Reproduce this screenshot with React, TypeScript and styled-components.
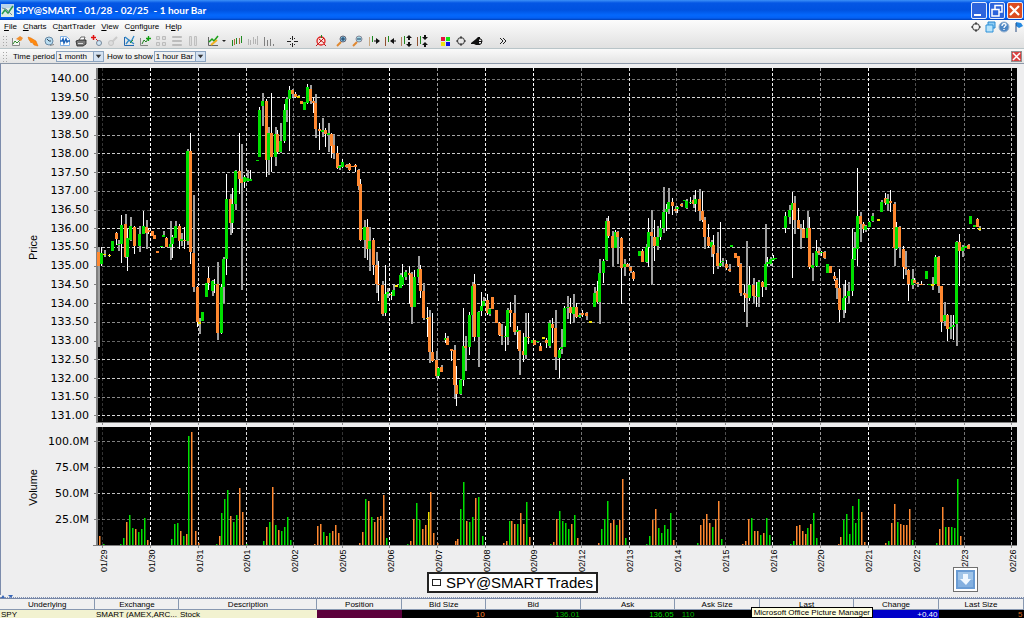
import { ReactNode } from "react";
import styled, { createGlobalStyle } from "styled-components";

type Candle = [number, number, number, number, number, string];

const COLORS: Record<string, string> = {
  G: "#00e000",
  O: "#ff8830",
  Y: "#f0e000",
};

const GRID_X = [
  [102, 0.2], [150, 1], [198, 0.85], [246, 0.85], [293, 0.45], [342, 0.2], [389, 1],
  [437, 0.6], [485, 0.95], [533, 1], [581, 0.45], [629, 0.85], [676, 0.45], [725, 0.3],
  [772, 0.95], [820, 0.6], [868, 1], [915, 0.3], [964, 0.45], [1011, 0.75],
];

const PRICE_GRID = [
  [79, 0.45], [97, 0.85], [116, 0.5], [135, 0.65], [153, 0.8], [172, 0.75], [191, 0.55],
  [210, 0.35], [228, 0.9], [247, 0.8], [266, 0.5], [284, 0.85], [303, 0.75], [322, 0.55],
  [341, 0.4], [359, 0.8], [378, 0.8], [397, 0.55], [415, 0.85],
];

const VOLUME_GRID = [[441, 0.5], [467, 0.75], [493, 0.75], [519, 0.4]];

const DATES = [
  "01/29", "01/30", "01/31", "02/01", "02/02", "02/05", "02/06", "02/07", "02/08", "02/09",
  "02/12", "02/13", "02/14", "02/15", "02/16", "02/20", "02/21", "02/22", "02/23", "02/26",
];

const PRICES = Array.from({ length: 19 }, (_, i) => (140 - i * 0.5).toFixed(2));
const VOLUMES = ["100.0M", "75.0M", "50.0M", "25.0M"];

// x, wick top, wick bottom, body top, body bottom, colour
const CANDLES: Candle[] = `
98 247 347 252 266 O|101 247 266 253 264 G|104 250 257 254 255 Y|109 254 257 255 256 Y|112 241 251 241 251 G
116 232 245 233 239 O|118 240 251 244 245 G|121 215 263 225 244 G|125 214 258 224 257 O|127 229 271 238 257 G
130 217 241 226 240 G|134 226 254 227 246 O|139 226 252 234 246 G|143 211 234 226 234 G|146 220 249 227 233 O
148 228 234 230 232 O|152 231 236 231 236 O|154 235 239 235 239 O|157 251 253 251 253 O|161 246 248 246 247 G
163 231 237 235 237 G|166 237 247 238 247 O|170 221 260 244 247 G|172 235 258 237 244 G|175 221 238 226 238 G
179 224 249 226 241 O|181 233 246 239 241 G|184 227 249 240 241 O|187 149 245 151 241 G|190 133 264 151 252 O
193 195 292 253 287 O|197 286 327 287 322 O|199 318 334 322 324 Y|202 312 321 312 321 G|206 283 297 283 297 G
208 267 290 278 283 O|212 280 296 281 291 G|214 279 293 284 285 G|217 262 340 284 333 O|221 284 334 287 333 G
223 257 304 259 287 G|226 174 275 199 259 G|230 194 235 199 223 O|232 188 233 204 223 G|235 170 210 171 204 G
239 133 194 171 179 O|241 144 290 179 183 O|244 175 188 177 182 G|247 170 182 178 181 G|250 170 181 179 181 G
257 160 161 160 161 G|259 107 157 110 157 G|262 93 126 101 106 G|266 99 177 101 160 O|268 127 175 133 160 G
271 93 172 133 157 O|275 127 166 134 157 G|277 130 154 134 152 O|280 123 153 141 152 G|284 104 143 110 141 G
286 97 122 99 110 G|289 86 151 90 99 G|292 89 97 90 94 O|295 92 98 94 97 O|298 95 97 96 98 Y
301 101 104 101 104 O|304 102 110 102 110 G|307 84 104 87 103 G|310 85 104 89 101 O|313 97 113 101 103 O
315 94 138 103 129 O|319 123 150 129 131 O|322 118 137 130 132 G|325 128 147 130 134 O|328 123 152 133 135 G
331 133 158 134 146 O|333 134 159 145 153 O|337 146 169 153 168 O|339 165 170 166 168 G|342 159 168 162 167 G
346 164 168 165 167 O|349 163 171 164 170 O|352 166 167 166 167 O|355 164 172 165 167 O|358 169 190 170 186 O
360 179 241 184 240 O|364 220 258 227 240 G|367 219 260 227 249 O|369 227 271 241 249 G|373 238 275 240 265 O
376 252 293 265 284 O|378 261 301 284 285 O|382 281 316 285 314 O|385 265 316 294 313 G|387 288 298 292 294 G
391 292 300 294 295 O|393 285 296 290 296 G|396 285 287 285 287 Y|400 273 288 275 288 G|402 264 286 277 285 G
405 270 280 272 277 G|409 266 304 273 275 O|411 272 324 274 307 O|414 270 307 277 307 G|418 256 283 269 277 G
420 265 298 269 291 O|423 283 320 291 318 O|427 307 337 318 319 Y|429 310 363 317 352 O|432 313 362 352 361 O
436 351 378 360 376 O|438 367 378 368 376 G|441 365 372 367 372 O|445 333 343 338 340 G|447 336 345 338 345 O
451 349 361 349 351 O|454 345 399 350 385 O|456 366 406 385 394 O|460 379 395 380 394 G|463 308 386 346 380 G
465 336 371 346 348 O|469 312 355 315 347 G|472 282 337 286 315 G|474 274 341 284 337 O|478 311 367 312 337 G
481 292 316 306 311 G|483 297 306 301 306 G|487 294 315 300 313 O|489 308 316 309 314 G|492 297 309 297 309 O
496 310 323 310 323 O|499 322 336 323 335 O|501 324 345 335 336 O|505 326 351 336 337 G|507 308 345 310 337 G
510 302 327 310 313 O|514 295 335 313 332 O|517 326 349 330 332 G|519 330 375 331 351 O|523 333 362 351 355 O
525 313 359 337 355 G|528 313 344 337 338 O|532 340 343 340 343 G|534 340 345 340 345 O|537 341 343 341 342 G
540 343 351 346 351 O|543 337 339 337 339 Y|546 338 348 340 343 O|549 320 348 323 346 G|552 318 343 324 328 O
555 310 370 328 357 O|559 348 378 350 358 G|561 329 354 347 349 G|564 306 347 308 347 G|567 296 319 307 308 G
570 298 324 307 313 O|573 294 323 307 314 G|576 303 318 307 317 O|579 313 318 315 317 G|582 310 317 313 315 O
586 312 320 313 316 O|590 321 323 321 323 Y|594 287 307 293 307 G|597 281 303 291 302 O|599 259 324 273 302 G
603 259 283 261 273 G|606 218 261 221 260 G|608 216 238 221 236 O|612 231 267 236 248 O|615 230 248 232 248 G
617 231 264 232 237 O|621 237 304 238 268 O|624 259 276 264 267 G|627 263 267 264 267 O|630 266 273 267 271 O
633 271 281 272 279 O|639 251 256 251 256 G|642 249 262 251 262 O|646 244 263 247 262 G|648 218 267 232 247 G
651 210 285 232 236 O|654 220 261 237 246 O|657 226 250 237 246 G|660 220 240 228 237 G|663 187 233 212 228 G
666 204 231 209 212 G|668 188 214 202 209 G|672 198 215 202 206 O|675 206 213 209 211 O|677 206 213 207 209 G
681 203 207 204 206 O|684 200 201 200 201 G|686 199 209 201 208 G|690 197 204 202 203 G|693 195 208 200 204 O
695 190 212 199 204 G|699 189 221 199 211 O|702 191 222 211 220 O|704 217 249 220 237 O|708 224 248 237 246 O
711 240 257 242 247 G|713 235 274 245 254 O|717 232 269 253 266 O|720 222 267 263 266 G|722 258 266 261 262 G
726 260 270 264 268 O|729 264 272 269 271 O|731 245 247 245 247 G|735 253 258 253 258 O|738 256 267 256 266 O
740 263 296 264 293 O|744 285 312 293 295 O|746 241 327 294 298 O|749 266 301 285 298 G|753 278 304 285 296 O
756 282 307 296 297 O|758 280 307 282 297 G|762 281 297 282 287 O|765 224 290 264 287 G|767 257 266 262 264 G
770 257 266 259 264 G|773 255 261 258 260 G|775 258 259 258 259 G|785 212 233 216 228 G|789 205 224 210 217 G
792 192 278 203 210 G|794 196 234 203 220 O|798 208 229 220 228 O|800 224 249 228 229 O|803 220 238 229 238 O
807 211 238 228 238 G|809 217 269 228 267 O|812 253 281 265 268 G|816 240 267 251 266 G|818 248 255 251 253 O
821 251 256 252 253 G|824 251 259 252 258 O|827 264 273 264 273 G|830 266 273 266 273 O|834 272 281 276 279 O
836 278 299 280 288 O|839 269 322 288 310 O|843 285 318 298 310 G|845 280 313 296 298 G|848 282 304 291 296 G
852 229 296 259 291 G|854 232 260 248 259 G|857 168 266 216 249 G|860 212 242 216 224 O|863 222 233 224 229 O
865 225 232 226 230 G|869 221 227 222 227 G|872 213 222 216 221 G|878 219 221 219 221 Y|881 200 212 202 212 G
885 193 205 198 203 O|887 194 211 199 204 G|890 190 212 201 203 O|894 202 266 204 248 O|896 222 250 227 249 G
899 226 258 227 247 O|903 246 279 249 267 O|905 251 275 267 269 O|908 269 301 270 284 O|912 269 289 279 285 G
914 278 283 280 283 O|917 282 287 283 284 O|921 281 285 284 285 O|926 271 279 271 279 G|929 284 285 284 285 G
932 277 290 284 286 Y|935 255 284 257 284 G|938 256 293 257 286 O|941 286 332 286 322 O|944 302 326 315 321 G
947 314 341 315 329 O|950 315 339 327 329 G|953 315 340 325 327 G|956 241 346 242 324 G|959 234 286 242 251 O
962 245 257 247 251 G|965 246 248 246 248 G|968 244 249 245 249 O|970 216 224 216 224 G|974 225 227 225 227 G
977 218 227 219 227 O|979 226 231 228 230 Y`
  .trim()
  .split(/[|\n]/)
  .map((row) => {
    const [x, high, low, top, bottom, tone] = row.split(" ");
    return [+x, +high, +low, +top, +bottom, tone];
  });

// x, top, colour
const BARS = `
99 536 O|103 544 G|120 544 G|123 538 G|126 522 O|129 515 G|132 528 G|135 529 O|138 532 G|141 529 G|144 518 G|147 540 O
171 539 G|174 524 G|177 523 G|180 531 O|183 536 G|186 534 O|188 436 G|191 432 O|195 531 O|198 543 O
216 544 G|219 536 O|221 513 G|224 499 G|227 490 G|230 516 O|233 522 G|236 515 G|239 488 O|242 512 O
246 544 G|263 541 G|266 527 O|269 522 G|272 487 O|275 525 G|278 530 O|281 531 G|284 527 G|287 517 G|290 540 G
314 544 O|317 526 O|320 524 O|323 532 G|326 536 O|329 533 G|332 531 O|335 525 O|338 533 O
359 543 O|362 532 O|365 499 G|368 501 O|371 517 G|374 522 O|377 517 O|380 516 O|383 495 O|386 538 G
407 544 G|410 541 O|413 519 O|416 503 G|419 520 G|422 529 O|425 525 O|428 512 Y|430 492 O|433 533 O|437 543 O
455 541 O|457 539 O|460 509 G|463 482 G|466 521 O|469 522 G|472 517 G|475 498 O|478 497 G|482 536 G
503 543 O|506 541 O|509 521 G|511 521 O|514 524 O|517 524 G|520 513 O|523 524 O|526 502 G|529 537 O
550 544 G|553 542 O|556 519 O|559 511 G|562 521 G|565 523 G|568 529 G|571 524 O|574 515 G|577 538 O
598 543 O|601 529 G|604 519 G|607 501 G|610 523 O|613 520 O|616 525 G|619 520 O|622 479 O|625 538 G
646 544 G|649 536 G|652 520 O|655 509 O|658 528 G|661 533 G|664 525 G|667 529 G|670 513 G|673 540 O
697 543 G|700 525 O|703 519 O|706 514 O|709 523 O|712 527 G|715 519 O|718 501 O|721 539 G
742 544 O|745 541 O|748 519 O|751 518 G|754 531 O|757 531 O|760 535 G|763 533 O|766 518 G|769 535 G
790 544 G|793 541 G|796 526 O|799 525 O|802 531 O|805 534 O|807 528 G|810 524 O|813 513 G|816 538 G
838 544 O|840 537 O|843 520 G|846 514 G|849 534 G|852 506 G|855 523 G|858 499 G|861 512 O|864 542 O
885 543 O|888 541 G|891 523 O|894 504 O|897 522 G|900 524 O|903 525 O|906 525 O|909 509 O|912 540 G
936 543 G|939 529 O|942 507 O|945 527 G|948 527 O|951 527 G|954 528 G|957 479 G|960 536 O`
  .trim()
  .split(/[|\n]/)
  .map((row) => row.split(" "));

const ICONS: Record<string, ReactNode> = {
  newChart: (
    <>
      <path d="M1.5 3v7.500h7V7" fill="#f4f4f0" stroke="#888" />
      <path d="M2 9l2-3 2 2 3-3" fill="none" stroke="#2a8a2a" />
      <path d="M5 4l4-3 3 2-2 3z" fill="#f09030" />
    </>
  ),
  hand: <path d="M1 2l3 1 5 3 2 5-4-1-2-3-1 1-1-2-1-1z" fill="#ff8a10" stroke="#e06a00" strokeWidth=".5" />,
  clock: (
    <>
      <circle cx="6" cy="6" r="4" fill="#b8dcf0" stroke="#6888a4" />
      <path d="M4 4l2 2h2" fill="none" stroke="#345" />
      <path d="M7 10.500l4-1" stroke="#888" />
    </>
  ),
  page: (
    <>
      <path d="M1.500 1.500h6l3 3v6h-9z" fill="#fff" stroke="#80b0e4" />
      <path d="M1 6h2l1-2 1 4 2-4 1 3 1-1h2" fill="none" stroke="#1c62b8" strokeWidth="1.500" />
    </>
  ),
  print: (
    <>
      <path d="M4 5l2-3h4l-1 3" fill="#fff" stroke="#444" strokeWidth=".8" />
      <path d="M1 6l3-1h7v4l-3 2H2z" fill="#777" stroke="#222" strokeWidth=".8" />
      <path d="M3 8.500h5" stroke="#ddd" />
    </>
  ),
  addLink: (
    <>
      <path d="M0 2.500h5M2.500 0v5" stroke="#e01010" strokeWidth="1.500" />
      <path d="M5 4l2 2" stroke="#e01010" />
      <circle cx="8" cy="8" r="2.500" fill="#cfe4f4" stroke="#789" />
    </>
  ),
  unlink: (
    <>
      <path d="M5 7l5-5" stroke="#cacaca" strokeWidth="2" />
      <circle cx="4" cy="8" r="2.500" fill="#ddd" stroke="#c4c4c4" />
    </>
  ),
  trend: (
    <>
      <path d="M1.500 2v8.500H11" fill="none" stroke="#2468b0" />
      <path d="M2 2l9 7M3 9l3-4 2 2 3-6" fill="none" stroke="#3088c8" strokeWidth="1.300" />
      <path d="M7 8l3-3" stroke="#2a9a2a" />
    </>
  ),
  addChart: (
    <>
      <path d="M1.500 3v7.500H9" fill="none" stroke="#888" />
      <path d="M3 9l2-4 2 2 2-3" fill="none" stroke="#208020" />
      <path d="M7 3.500h5M9.500 1v5" stroke="#10a010" strokeWidth="1.300" />
    </>
  ),
  grid: <path d="M1.500 1.500h3v3h-3zM7.500 1.500h3v3h-3zM1.500 7.500h3v3h-3zM7.500 7.500h3v3h-3z" fill="#ddd" stroke="#bcbcbc" />,
  rows: <path d="M1.500 1.500h9v1h-9zM1.500 5.500h9v1h-9zM1.500 9.500h9v1h-9z" fill="#ccc" stroke="#bcbcbc" />,
  columns: <path d="M2.500 1.500h2v9h-2zM7.500 1.500h2v9h-2z" fill="#ddd" stroke="#c0c0c0" />,
  bars: (
    <>
      <path d="M1.500 5v6M5.500 3v6M10.500 1v7" stroke="#208a20" />
      <path d="M3.500 4v6M8.500 3v6" stroke="#b06838" />
    </>
  ),
  barsOff: <path d="M1.500 4v6M3.500 5v5M6.500 2v7M8.500 4v5M10.500 1v9" stroke="#b4b4b4" />,
  volume: <path d="M1.500 2v9M4.500 5v6M7.500 4v7M10.500 9v2" stroke="#808080" />,
  cross: <path d="M6.500 1v4M6.500 8v4M1 6.500h4M8 6.500h4M4 3.500h1M4 9.500h1M8 3.500h1M8 9.500h1" stroke="#222" />,
  alert: (
    <>
      <circle cx="6" cy="6" r="4" fill="#f8e4e0" stroke="#e02020" strokeWidth="1.300" />
      <path d="M3 9l6-6M4 4l5 4M1 11l2-2M9 9l2 2" stroke="#c01818" />
      <path d="M6.500 0v3" stroke="#208020" />
    </>
  ),
  zoomIn: (
    <>
      <path d="M1 11l4-4" stroke="#e08830" strokeWidth="2" />
      <circle cx="7" cy="4" r="3" fill="#7ec0e0" stroke="#667" />
      <path d="M5 4h4M7 2v4" stroke="#1a3a60" />
    </>
  ),
  zoomOut: (
    <>
      <path d="M1 11l4-4" stroke="#e08830" strokeWidth="2" />
      <circle cx="7" cy="4" r="3" fill="#a4d8e4" stroke="#889" />
      <path d="M5 4h4" stroke="#1a3a60" />
    </>
  ),
  scrollRight: (
    <>
      <path d="M1.500 2v9" stroke="#c8a880" />
      <path d="M4.500 1v6" stroke="#208a20" />
      <path d="M6 5.500h2V3l4 3-4 3V6.500H6z" fill="#111" />
    </>
  ),
  scrollLeft: (
    <>
      <path d="M1.500 2v9" stroke="#905030" />
      <path d="M4.500 1v6" stroke="#208a20" />
      <path d="M12 5.500h-2V3L6 6l4 3V6.500h2z" fill="#111" />
    </>
  ),
  stretch: (
    <>
      <path d="M1.500 2v9" stroke="#b08060" />
      <path d="M4.500 1v8" stroke="#208a20" />
      <path d="M9 0l3 3h-2v2H8V3H6zM9 12l3-3h-2V7H8v2H6z" fill="#111" />
    </>
  ),
  squeeze: (
    <>
      <path d="M1.500 2v9" stroke="#905030" />
      <path d="M4.500 1v8" stroke="#208a20" />
      <path d="M9 5l3-3h-2V0H8v2H6zM9 7l3 3h-2v2H8v-2H6z" fill="#111" />
    </>
  ),
  palette: (
    <>
      <path d="M2 2h4v4H2z" fill="#e81040" />
      <path d="M7 2h4v4H7z" fill="#10e810" />
      <path d="M2 7h4v4H2z" fill="#f0e010" />
      <path d="M7 7h4v4H7z" fill="#1010e0" />
    </>
  ),
  target: (
    <>
      <circle cx="6" cy="6" r="3.500" fill="none" stroke="#333" />
      <path d="M6 1v3M6 8v3M1 6h2M9 6h2" stroke="#333" />
    </>
  ),
  megaphone: (
    <>
      <path d="M0 8l5-4 2-2h2v8H5L3 9H0z" fill="#111" />
      <path d="M8 4h2l1 2-1 3H8" fill="#eee" stroke="#111" />
      <path d="M8 6.500h3" stroke="#111" />
    </>
  ),
  windows: (
    <>
      <path d="M4 1h7v6H4z" fill="#8ccbf4" stroke="#2888d0" />
      <path d="M2 4h7v7H2z" fill="#b8e4fc" stroke="#2c90d8" />
    </>
  ),
  help: (
    <>
      <circle cx="6" cy="6" r="5" fill="#4c86c4" stroke="#9ab4d0" />
      <path d="M4 5c0-3 4-3 4-1 0 1-2 1-2 3M6 8v1" fill="none" stroke="#fff" strokeWidth="1.300" />
    </>
  ),
  pin: (
    <>
      <path d="M4 1l5 1 2 3-4 2-3-2z" fill="#2488e0" />
      <path d="M4 2v9" stroke="#244a80" />
    </>
  ),
};

const TOOL_GROUPS: { lead: number; names: string[] }[] = [
  {
    lead: 1,
    names: [
      "newChart", "hand", "clock", "page", "print", "addLink",
      "unlink", "trend", "addChart", "grid", "rows", "columns",
    ],
  },
  { lead: 8, names: ["draw", "bars", "barsOff", "volume"] },
  { lead: 11, names: ["cross"] },
  { lead: 17, names: ["alert"] },
  { lead: 9, names: ["zoomIn", "zoomOut", "scrollRight", "scrollLeft", "stretch", "squeeze"] },
  { lead: 11, names: ["palette", "target", "megaphone"] },
];

const QUOTES = [
  { head: "Underlying", value: "SPY", width: 95, bg: "#f2f2d0", color: "#000" },
  { head: "Exchange", value: "SMART (AMEX,ARC...", width: 84, bg: "#f2f2d0", color: "#000" },
  { head: "Description", value: "Stock", width: 138, bg: "#f2f2d0", color: "#000" },
  { head: "Position", value: "", width: 85, bg: "#5c003c", color: "#fff" },
  { head: "Bid Size", value: "10", width: 84, bg: "#000", color: "#ff8830", right: true },
  { head: "Bid", value: "136.01", width: 95, bg: "#000", color: "#00b400", right: true },
  { head: "Ask", value: "136.05", width: 94, bg: "#000", color: "#00d800", right: true },
  { head: "Ask Size", value: "110", width: 85, bg: "#000", color: "#00b400", indent: 6 },
  { head: "Last", value: "", width: 94, bg: "#000", color: "#fff", right: true },
  { head: "Change", value: "+0.40", width: 85, bg: "#0000c8", color: "#fff", right: true },
  { head: "Last Size", value: "5", width: 85, bg: "#000", color: "#d86820", right: true },
];

function Icon({ name }: { name: string }) {
  return (
    <svg width="12" height="12" viewBox="0 0 12 12" aria-hidden="true">
      {ICONS[name]}
    </svg>
  );
}

function GridLines({ rows, top, bottom }: { rows: number[][]; top: number; bottom: number }) {
  return (
    <>
      {GRID_X.map(([x, opacity]) => (
        <path
          key={x}
          d={`M${x + 0.5} ${top}V${bottom}`}
          stroke="#fff"
          strokeDasharray="3 2"
          opacity={opacity}
        />
      ))}
      {rows.map(([y, opacity]) => (
        <g key={y}>
          <path d={`M97 ${y + 0.5}H1017`} stroke="#fff" strokeDasharray="3 2" opacity={opacity} />
          <path d={`M94 ${y + 0.5}H97`} stroke="#808080" />
        </g>
      ))}
      {GRID_X.map(([x]) => (
        <path key={x} d={`M${x + 0.5} ${bottom}v3`} stroke="#909090" />
      ))}
    </>
  );
}

function PricePlot() {
  return (
    <PlotSvg viewBox="93 68 924 359" preserveAspectRatio="none" role="img" aria-label="Price">
      <rect x="97" y="68" width="920" height="354" fill="#000" />
      <GridLines rows={PRICE_GRID} top={68} bottom={422} />
      <rect x="96" y="68" width="2" height="355" fill="#808080" />
      <rect x="96" y="422" width="921" height="1" fill="#808080" />
      {CANDLES.map(([x, high, low, top, bottom, tone], i) => (
        <g key={x}>
          <rect
            x={x}
            y={high}
            width={i % 2 === 0 ? 2 : 1}
            height={low - high}
            fill={i % 2 === 0 ? "#a0a0a0" : "#fff"}
          />
          <rect x={x - 1} y={top} width="3" height={bottom - top} fill={COLORS[tone]} />
        </g>
      ))}
    </PlotSvg>
  );
}

function VolumePlot() {
  return (
    <PlotSvg viewBox="93 427 924 121" preserveAspectRatio="none" role="img" aria-label="Volume">
      <rect x="97" y="427" width="920" height="118" fill="#000" />
      <GridLines rows={VOLUME_GRID} top={427} bottom={545} />
      {BARS.map(([x, top, tone]) => (
        <rect key={x} x={x} y={+top} width="1.5" height={545 - +top} fill={COLORS[tone]} />
      ))}
      <rect x="96" y="427" width="2" height="119" fill="#808080" />
      <rect x="93" y="545" width="924" height="1" fill="#808080" />
    </PlotSvg>
  );
}

function App() {
  return (
    <>
      <GlobalStyle />
      <Window>
        <TitleBar>
          <svg width="13" height="13" viewBox="0 0 13 13" aria-hidden="true">
            <path d="M0 0h13v13H0z" fill="#dcebe4" />
            <path d="M0 0h13v4H0z" fill="#b8d4ec" />
            <path d="M1 10l3-4 3 3 5-7" fill="none" stroke="#2a9a50" strokeWidth="1.500" />
            <path d="M1 4l4 1 6 6" fill="none" stroke="#7088a0" />
          </svg>
          <Title>{"SPY@SMART - 01/28 - 02/25  - 1 hour Bar"}</Title>
          <WindowButton aria-label="Minimize">
            <svg width="16" height="17" viewBox="0 0 16 17">
              <path d="M3 12h7v2H3z" fill="#fff" />
            </svg>
          </WindowButton>
          <WindowButton aria-label="Restore">
            <svg width="16" height="17" viewBox="0 0 16 17" fill="none" stroke="#fff">
              <path d="M6 7V3.500h7V10h-3" strokeWidth="1.500" />
              <path d="M3 7.500h7V14H3z" strokeWidth="1.500" />
            </svg>
          </WindowButton>
          <WindowButton $close aria-label="Close">
            <svg width="16" height="17" viewBox="0 0 16 17">
              <path d="M3 4l9 9M12 4l-9 9" stroke="#fff" strokeWidth="2.200" />
            </svg>
          </WindowButton>
        </TitleBar>

        <Bars>
          <MenuBar>
            <MenuButton><u>F</u>ile</MenuButton>
            <MenuButton><u>C</u>harts</MenuButton>
            <MenuButton>C<u>h</u>artTrader</MenuButton>
            <MenuButton><u>V</u>iew</MenuButton>
            <MenuButton>C<u>o</u>nfigure</MenuButton>
            <MenuButton>H<u>e</u>lp</MenuButton>
            <MenuTools>
              <ToolButton aria-label="Center"><Icon name="target" /></ToolButton>
              <ToolButton aria-label="Windows"><Icon name="windows" /></ToolButton>
              <ToolButton aria-label="Help topics"><Icon name="help" /></ToolButton>
              <ToolButton aria-label="Pin"><Icon name="pin" /></ToolButton>
            </MenuTools>
          </MenuBar>
          <ToolBar>
            <Grip />
            {TOOL_GROUPS.map(({ lead, names }) => (
              <ToolGroup key={names[0]} $lead={lead}>
                {names.map((name) =>
                  name === "draw" ? (
                    <ToolButton key={name} $wide aria-label="Draw">
                      <svg width="20" height="12" viewBox="0 0 20 12">
                        <path d="M1.500 2v8.500H11" fill="none" stroke="#666" />
                        <path d="M2 7l3-3 2 2 4-5" fill="none" stroke="#18a018" strokeWidth="1.500" />
                        <path d="M4 10l6-5" stroke="#f0b020" strokeWidth="2" />
                        <path d="M15 5h4l-2 2z" fill="#222" />
                      </svg>
                    </ToolButton>
                  ) : (
                    <ToolButton key={name} aria-label={name}><Icon name={name} /></ToolButton>
                  )
                )}
              </ToolGroup>
            ))}
            <ToolGroup $lead={14}>
              <ToolButton aria-label="More">
                <svg width="12" height="12" viewBox="0 0 12 12">
                  <path d="M3 3l3 3-3 3M6 3l3 3-3 3" fill="none" stroke="#222" />
                </svg>
              </ToolButton>
            </ToolGroup>
          </ToolBar>
          <PeriodBar>
            <Grip />
            <PeriodLabel htmlFor="period">Time period</PeriodLabel>
            <SelectBox>
              <Select id="period" defaultValue="1 month"><option>1 month</option></Select>
              <Caret viewBox="0 0 10 10"><path d="M2 3h6L5 7z" fill="#333" /></Caret>
            </SelectBox>
            <PeriodLabel htmlFor="bar">How to show</PeriodLabel>
            <SelectBox>
              <Select id="bar" defaultValue="1 hour Bar" $wide><option>1 hour Bar</option></Select>
              <Caret viewBox="0 0 10 10"><path d="M2 3h6L5 7z" fill="#333" /></Caret>
            </SelectBox>
            <CloseChart aria-label="Close chart">
              <svg width="9" height="9" viewBox="0 0 9 9">
                <path d="M1 1l7 7M8 1l-7 7" stroke="#fff" strokeWidth="1.500" />
              </svg>
            </CloseChart>
          </PeriodBar>
        </Bars>

        <Chart>
          <Panel $grow={359}>
            <Axis>
              <AxisTitle>Price</AxisTitle>
              <AxisLabels $top={5} $bottom={5}>
                {PRICES.map((price) => <AxisLabel key={price}>{price}</AxisLabel>)}
              </AxisLabels>
            </Axis>
            <Plot><PricePlot /></Plot>
          </Panel>
          <Panel $grow={121}>
            <Axis>
              <AxisTitle>Volume</AxisTitle>
              <AxisLabels $top={9} $bottom={22}>
                {VOLUMES.map((volume) => <AxisLabel key={volume}>{volume}</AxisLabel>)}
              </AxisLabels>
            </Axis>
            <Plot><VolumePlot /></Plot>
          </Panel>
          <Dates>
            {DATES.map((date) => <DateLabel key={date}>{date}</DateLabel>)}
          </Dates>
          <Legend>
            <LegendMark />
            SPY@SMART Trades
          </Legend>
          <Download aria-label="Download">
            <svg width="19" height="19" viewBox="0 0 19 19">
              <path d="M0 0h19v19H0z" fill="#6a9cd4" />
              <path d="M2 2h15v8H2z" fill="#a0c4e8" />
              <path d="M2 10h15v7H2z" fill="#84b0e0" />
              <path d="M7 4h5v5h3l-5 6-6-6h3z" fill="#f0f8ff" />
            </svg>
          </Download>
        </Chart>

        <Quotes>
          <Splitter>
            <svg width="14" height="3" viewBox="0 0 14 3">
              <path d="M1 3l2-3 2 3zM8 0h5l-2 3z" fill="#3a68b8" />
            </svg>
          </Splitter>
          <QuoteTable>
            <colgroup>
              {QUOTES.map(({ head, width }) => (
                <col key={head} style={{ width: `${(width / 1024) * 100}%` }} />
              ))}
            </colgroup>
            <thead>
              <tr>{QUOTES.map(({ head }) => <QuoteHead key={head}>{head}</QuoteHead>)}</tr>
            </thead>
            <tbody>
              <tr>
                {QUOTES.map(({ head, value, bg, color, right, indent }) => (
                  <QuoteCell key={head} $bg={bg} $color={color} $right={right} $indent={indent}>
                    {value}
                  </QuoteCell>
                ))}
              </tr>
            </tbody>
          </QuoteTable>
          <Tooltip role="tooltip">Microsoft Office Picture Manager</Tooltip>
        </Quotes>
      </Window>
    </>
  );
}

export default App;

const GlobalStyle = createGlobalStyle`
  * {
    box-sizing: border-box;
  }
  body {
    margin: 0;
    overflow: hidden;
    font-family: "Liberation Sans", Arial, sans-serif;
    font-size: 8px;
    color: #000;
  }
  button, select {
    font: inherit;
    color: inherit;
    margin: 0;
    padding: 0;
    border: 0;
    background: none;
  }
  svg {
    display: block;
  }
`;

const Window = styled.div`
  display: flex;
  flex-direction: column;
  height: 100vh;
  background: #eeeeef;
`;

const TitleBar = styled.header`
  display: flex;
  align-items: center;
  gap: 2px;
  height: 20px;
  padding: 0 1px;
  background: linear-gradient(#3c90f8 0, #0456e4 15%, #0052e0 50%, #0468fc 75%, #0460f4 90%, #0040b8 100%);
`;

const Title = styled.h1`
  flex: 1;
  margin: 0;
  font-family: Lato, sans-serif;
  font-size: 10px;
  font-weight: 700;
  color: #fff;
  white-space: pre;
`;

const WindowButton = styled.button<{ $close?: boolean }>`
  width: 16px;
  height: 17px;
  border: 1px solid #e4ecfc;
  border-radius: 2px;
  background: ${({ $close }) => ($close ? "#dc4c20" : "#2c64dc")};

  svg {
    margin: -1px;
  }
`;

const Bars = styled.div`
  background: linear-gradient(#fcfcfc, #e0e0e0 28px, #fafafa 29px, #e2e2e2);
`;

const MenuBar = styled.nav`
  display: flex;
  align-items: center;
  gap: 6px;
  height: 13px;
  padding-left: 4px;
`;

const MenuButton = styled.button`
  line-height: 12px;
`;

const MenuTools = styled.div`
  display: flex;
  gap: 2px;
  margin-left: auto;
`;

const ToolBar = styled.div`
  display: flex;
  align-items: center;
  height: 16px;
  padding-left: 2px;
  border-bottom: 1px solid #b8c4c8;
`;

const Grip = styled.span`
  width: 6px;
  height: 11px;
  margin-right: 2px;
  background: radial-gradient(#a8a8a8 1px, transparent 1px) 0 0 / 3px 3px;
`;

const ToolGroup = styled.div<{ $lead: number }>`
  display: flex;
  gap: 4px;
  margin-left: ${({ $lead }) => $lead}px;
`;

const ToolButton = styled.button<{ $wide?: boolean }>`
  width: ${({ $wide }) => ($wide ? 20 : 12)}px;
  height: 12px;
`;

const PeriodBar = styled.div`
  display: flex;
  align-items: center;
  height: 15px;
  padding: 0 2px;
  border-bottom: 1px solid #8c98a8;
`;

const PeriodLabel = styled.label`
  padding: 0 1px 0 3px;
`;

const SelectBox = styled.div`
  position: relative;
  display: flex;
`;

const Select = styled.select<{ $wide?: boolean }>`
  appearance: none;
  width: ${({ $wide }) => ($wide ? 52 : 48)}px;
  height: 11px;
  padding-left: 1px;
  border: 1px solid #8ca4c0;
  background: #f0f0f0;
`;

const Caret = styled.svg`
  position: absolute;
  top: 0;
  right: 0;
  width: 11px;
  height: 11px;
  border: 1px solid #8ca4c0;
  background: #d4e2f2;
  pointer-events: none;
`;

const CloseChart = styled.button`
  margin-left: auto;
  border: 1px solid #909090;
  background: #d84040;
`;

const Chart = styled.main`
  position: relative;
  display: flex;
  flex: 1;
  flex-direction: column;
  min-height: 0;
  padding: 4px 0 2px;
  border-left: 1px solid #7c8cac;
`;

const Panel = styled.section<{ $grow: number }>`
  display: flex;
  flex: ${({ $grow }) => $grow} 1 0;
  min-height: 0;
  padding-right: 7px;
`;

const Axis = styled.div`
  display: flex;
  justify-content: space-between;
  width: 92px;
  padding: 0 4px 0 26px;
`;

const AxisTitle = styled.h2`
  align-self: center;
  margin: 0;
  font-family: "Liberation Sans Narrow", "Liberation Sans", sans-serif;
  font-size: 11px;
  font-weight: 400;
  line-height: 12px;
  writing-mode: vertical-rl;
  rotate: 180deg;
`;

const AxisLabels = styled.div<{ $top: number; $bottom: number }>`
  display: flex;
  flex-direction: column;
  justify-content: space-between;
  align-items: flex-end;
  padding: ${({ $top, $bottom }) => `${$top}px 0 ${$bottom}px`};
`;

const AxisLabel = styled.span`
  font-family: "DejaVu Sans", sans-serif;
  font-size: 11px;
  line-height: 12px;
`;

const Plot = styled.div`
  position: relative;
  flex: 1;
`;

const PlotSvg = styled.svg`
  position: absolute;
  inset: 0;
  width: 100%;
  height: 100%;
`;

const Dates = styled.div`
  display: flex;
  justify-content: space-between;
  height: 24px;
  padding: 1px 5px 0 97px;
`;

const DateLabel = styled.span`
  width: 12px;
  font-family: "Liberation Sans Narrow", "Liberation Sans", sans-serif;
  font-size: 9px;
  line-height: 12px;
  text-align: right;
  writing-mode: vertical-rl;
  rotate: 180deg;
`;

const Legend = styled.div`
  display: flex;
  align-items: center;
  align-self: center;
  gap: 5px;
  height: 21px;
  padding: 0 3px;
  border: 2px solid #222;
  background: #fff;
  font-size: 15px;
  line-height: 17px;
`;

const LegendMark = styled.span`
  width: 9px;
  height: 7px;
  border: 1px solid #222;
`;

const Download = styled.button`
  position: absolute;
  right: 46px;
  bottom: 3px;
  padding: 2px;
  border: 1px solid #707070;
  background: #fff;
`;

const Quotes = styled.footer`
  position: relative;
  height: 23px;
  overflow: hidden;
`;

const Splitter = styled.div`
  height: 3px;
  border-bottom: 1px dotted #8090b0;
`;

const QuoteTable = styled.table`
  width: 100%;
  table-layout: fixed;
  border-collapse: collapse;
  border-top: 1px solid #7888a8;
`;

const QuoteHead = styled.th`
  height: 11px;
  padding: 0;
  border-right: 1px solid #8898b0;
  border-bottom: 1px solid #8898b0;
  background: #f0f0f0;
  font-weight: 400;
  line-height: 9px;
`;

const QuoteCell = styled.td<{ $bg: string; $color: string; $right?: boolean; $indent?: number }>`
  height: 11px;
  padding: 0 1px;
  overflow: hidden;
  background: ${({ $bg }) => $bg};
  color: ${({ $color }) => $color};
  line-height: 10px;
  text-align: ${({ $right }) => ($right ? "right" : "left")};
  text-indent: ${({ $indent = 0 }) => $indent}px;
  white-space: nowrap;
`;

const Tooltip = styled.div`
  position: absolute;
  right: 151px;
  bottom: 0;
  padding: 0 2px;
  border: 1px solid #000;
  background: #ffffe1;
  line-height: 9px;
`;
